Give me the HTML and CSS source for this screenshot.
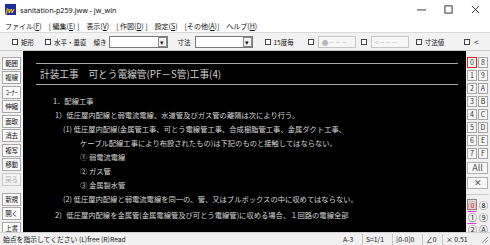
FILE: index.html
```html
<!DOCTYPE html>
<html lang="ja">
<head>
<meta charset="utf-8">
<title>jw_win</title>
<link rel="stylesheet" href="styles.css">
</head>
<body>
<div class="win">
  <div class="titlebar">
    <svg class="appicon" width="11" height="11" viewBox="0 0 11 11"><rect width="11" height="11" fill="#1b2c9e"/><text x="0.5" y="8.6" font-size="8" font-family="Liberation Sans" font-weight="bold" font-style="italic" fill="#ffd000">jw</text></svg>
    <span class="title">sanitation-p259.jww - jw_win</span>
    <div class="winctrls">
      <svg class="wc" width="10" height="10" viewBox="0 0 10 10"><path d="M0 5.5H10" stroke="#222" stroke-width="1"/></svg>
      <svg class="wc" width="10" height="10" viewBox="0 0 10 10"><rect x="1" y="1" width="8" height="8" fill="none" stroke="#222" stroke-width="1"/></svg>
      <svg class="wc" width="10" height="10" viewBox="0 0 10 10"><path d="M1 1L9 9M9 1L1 9" stroke="#222" stroke-width="1"/></svg>
    </div>
  </div>
  <div class="menubar">
    <span class="mi">ファイル(<u>F</u>)</span>
    <span class="mi">[ 編集(<u>E</u>) ]</span>
    <span class="mi">表示(<u>V</u>)</span>
    <span class="mi">[ 作図(<u>D</u>) ]</span>
    <span class="mi">設定(<u>S</u>)</span>
    <span class="mi">[その他(<u>A</u>)]</span>
    <span class="mi">ヘルプ(<u>H</u>)</span>
  </div>
  <div class="toolbar">
    <span class="cb"></span><span class="lbl">矩形</span>
    <span class="cb m-sui"></span><span class="lbl">水平・垂直</span>
    <span class="lbl m-kat">傾き</span>
    <span class="combo c1"><span class="arr">▾</span></span>
    <span class="lbl m-sun">寸法</span>
    <span class="combo c2"><span class="arr">▾</span></span>
    <span class="cb m-15"></span><span class="lbl">15度毎</span>
    <span class="cb m-d1"></span><span class="dbox">●－－－</span>
    <span class="cb m-d2"></span><span class="dbox">&lt;－－－</span>
    <span class="cb m-sv"></span><span class="lbl">寸法値</span>
    <span class="cb m-lt"></span><span class="lbl lt">&lt;</span>
  </div>
  <div class="main">
    <div class="lefttools">
      <div class="tb">範囲</div>
      <div class="tb">複線</div>
      <div class="tb">ｺｰﾅｰ</div>
      <div class="tb">伸縮</div>
      <div class="tb">面取</div>
      <div class="tb">消去</div>
      <div class="tb">複写</div>
      <div class="tb">移動</div>
      <div class="tb dis">戻る</div>
      <div class="tb gap">新規</div>
      <div class="tb">開く</div>
      <div class="tb">上書</div>
    </div>
    <div class="canvas">
      <div class="rule"></div>
      <div class="ctitle">計装工事　可とう電線管(PF－S管)工事(4)</div>
      <div class="rule"></div>
      <div class="body">
        <div class="ln i1">1．配線工事</div>
        <div class="ln i2">1）低圧屋内配線と弱電流電線、水道管及びガス管の離隔は次により行う。</div>
        <div class="ln i3">(1) 低圧屋内配線(金属管工事、可とう電線管工事、合成樹脂管工事、金属ダクト工事、</div>
        <div class="ln i4">ケーブル配線工事により布設されたもの)は下記のものと接触してはならない。</div>
        <div class="ln i4">① 弱電流電線</div>
        <div class="ln i4">② ガス管</div>
        <div class="ln i4">③ 金属製水管</div>
        <div class="ln i3">(2) 低圧屋内配線と弱電流電線を同一の、管、又はプルボックスの中に収めてはならない。</div>
        <div class="ln i2 sp">2）低圧屋内配線を金属管(金属電線管及び可とう電線管)に収める場合、１回路の電線全部</div>
      </div>
    </div>
    <div class="righttools">
      <div class="grid">
        <span class="lb on">0</span><span class="lb">8</span>
        <span class="lb">1</span><span class="lb">9</span>
        <span class="lb">2</span><span class="lb">A</span>
        <span class="lb">3</span><span class="lb">B</span>
        <span class="lb">4</span><span class="lb">C</span>
        <span class="lb">5</span><span class="lb">D</span>
        <span class="lb">6</span><span class="lb">E</span>
        <span class="lb">7</span><span class="lb">F</span>
      </div>
      <div class="wb">All</div>
      <div class="wb">✕</div>
      <div class="sep"></div>
      <div class="grid g2">
        <span class="cl sel"><span class="red">⓪</span></span><span class="cl">⑧</span>
        <span class="cl mg">①</span><span class="cl">⑨</span>
        <span class="cl mg">②</span><span class="cl">Ⓐ</span>
      </div>
    </div>
  </div>
  <div class="statusbar">
    <span class="msg">始点を指示してください (L)free (R)Read</span>
    <span class="sf s-a">A-3</span>
    <span class="sf s-s">S=1/1</span>
    <span class="sf s-l">[0-0]0</span>
    <span class="sf s-ang">∠0</span>
    <span class="sf s-x">× 0.51</span>
    <svg class="grip" width="9" height="9" viewBox="0 0 9 9"><path d="M8 2L2 8M8 5L5 8" stroke="#999" stroke-width="1"/></svg>
  </div>
</div>
</body>
</html>
```
FILE: styles.css
```css
* { box-sizing: border-box; }
html, body { margin: 0; padding: 0; }
body {
  width: 490px; height: 245px; overflow: hidden;
  font-family: "Noto Sans CJK JP", "Noto Sans", sans-serif;
  color: #000; background: #fff;
}
.win { width: 490px; height: 245px; display: flex; flex-direction: column; }

.titlebar {
  height: 19px; flex: none; display: flex; align-items: center; background: #fff;
  padding-left: 5px;
}
.appicon { display: block; flex: none; }
.title { font-family: "Noto Sans", sans-serif; font-size: 7.2px; margin-left: 4px; color: #111; white-space: nowrap; }
.winctrls { margin-left: auto; display: flex; align-items: center; gap: 18px; padding-right: 10px; }
.wc { display: block; width: 9px; height: 9px; }

.menubar {
  height: 13px; flex: none; display: flex; align-items: center; background: #fff;
  padding-left: 5px; gap: 7px; font-size: 7px; color: #111; white-space: nowrap;
}
.mi u { text-decoration: underline; text-underline-offset: 1px; }

.toolbar {
  height: 19px; flex: none; display: flex; align-items: center; background: #f2f2f2;
  border-top: 1px solid #d9d9d9; border-bottom: 1px solid #c8c8c8;
  padding-left: 12px; font-size: 6.5px; color: #111; white-space: nowrap; overflow: hidden;
}
.toolbar > * { flex: none; }
.cb { width: 6px; height: 6px; border: 1px solid #444; background: #fff; }
.lbl { margin-left: 3px; }
.m-sui { margin-left: 11px; }
.m-kat { margin-left: 7px; }
.combo { height: 12px; background: #fff; border: 1px solid #7a7a7a; display: flex; justify-content: flex-end; }
.c1 { width: 59px; margin-left: 2px; }
.m-sun { margin-left: 10px; }
.c2 { width: 58px; margin-left: 4px; }
.arr { width: 9px; height: 10px; border: 1px solid #888; background: #f4f4f4; font-size: 7px; line-height: 8px; text-align: center; }
.m-15 { margin-left: 12px; }
.m-d1 { margin-left: 14px; }
.dbox { height: 12px; width: 38px; border: 1px solid #c6c6c6; background: #f7f7f7; color: #b8b8b8; font-size: 6.5px; line-height: 10px; padding-left: 3px; margin-left: 4px; }
.m-d2 { margin-left: 5px; }
.m-sv { margin-left: 7px; }
.m-lt { margin-left: 20px; }
.lt { font-size: 8px; margin-left: 4px; }

.main { flex: 1; display: flex; min-height: 0; background: #f0f0f0; }
.lefttools { width: 23px; flex: none; padding: 5.5px 0 0 2px; overflow: hidden; }
.tb {
  width: 19px; height: 13px; margin-bottom: 1.5px;
  background: #fbfbfb; border: 1px solid #a8a8a8;
  font-size: 6.5px; line-height: 11px; text-align: center; color: #111;
  letter-spacing: -0.2px; white-space: nowrap; overflow: hidden;
}
.tb.dis { color: #b0b0b0; background: #f3f3f3; border-color: #c8c8c8; }
.tb.gap { margin-top: 7px; }

.canvas { width: 443px; flex: none; background: #000; padding-top: 12px; color: #d6d6d6; }
.rule { height: 1px; background: #a9a9a9; margin: 0 8px 0 13px; }
.ctitle { height: 20px; line-height: 20px; font-size: 9.7px; padding-left: 17px; color: #d0d0d0; white-space: pre; }
.body { padding-top: 9px; }
.ln { height: 14px; line-height: 14px; font-size: 7.3px; white-space: pre; }
.ln.sp { margin-top: 2px; }
.i1 { padding-left: 30px; }
.i2 { padding-left: 32px; }
.i3 { padding-left: 40px; }
.i4 { padding-left: 57px; }

.righttools { flex: 1; padding: 6px 0 0 1px; }
.grid { display: grid; grid-template-columns: 10px 10px; column-gap: 1px; row-gap: 2px; }
.lb {
  height: 11px; border: 1px solid #a5a5a5; background: #f7f7f7;
  font-size: 7px; line-height: 9px; text-align: center; color: #333;
}
.lb.on { border-color: #e02020; }
.wb {
  width: 21px; height: 12px; margin-top: 3px; border: 1px solid #b0b0b0; background: #f7f7f7;
  font-size: 9px; line-height: 10px; text-align: center; color: #555;
}
.sep { height: 1px; background: #c8c8c8; margin: 5px 0 4px -1px; width: 23px; }
.g2 { row-gap: 1px; }
.cl { height: 11px; font-size: 9px; line-height: 11px; text-align: center; color: #333; border: 1px solid transparent; }
.cl.sel { border-color: #888; background: #dcdcdc; }
.cl.mg { border-top: 1px solid #d040d0; }
.red { color: #e02020; }

.statusbar {
  height: 13px; flex: none; display: flex; align-items: center; background: #f0f0f0;
  border-top: 1px solid #d0d0d0; font-size: 6.8px; color: #111; padding-left: 3px; white-space: nowrap;
}
.msg { width: 337px; }
.sf { border-left: 1px solid #c4c4c4; padding-left: 3px; height: 11px; line-height: 11px; }
.s-a { border-left: none; width: 22px; }
.s-s { width: 30px; }
.s-l { width: 30px; }
.s-ang { width: 20px; }
.s-x { width: 28px; }
.grip { margin-left: auto; margin-right: 1px; }
```
